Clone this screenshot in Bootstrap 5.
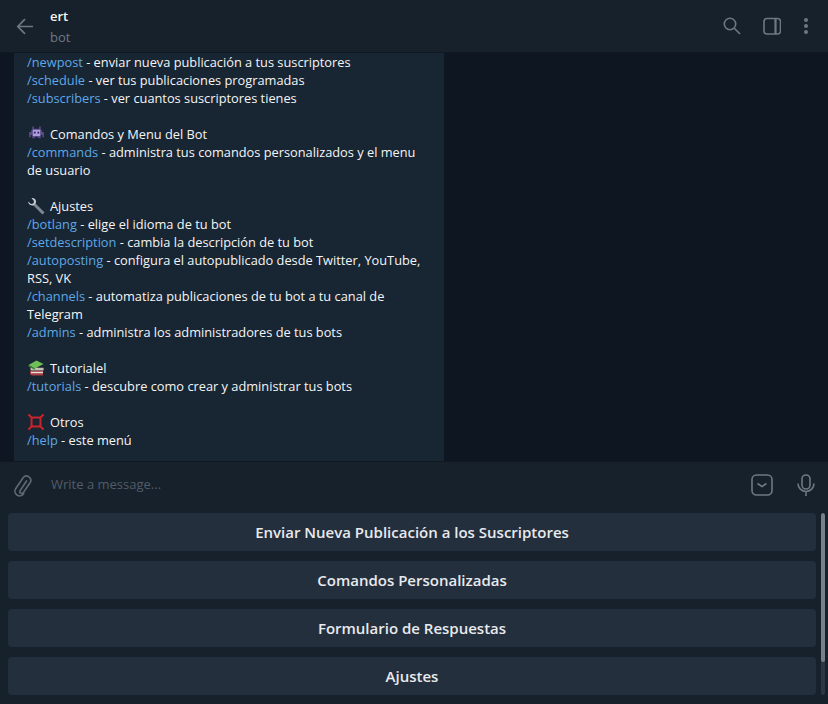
<!DOCTYPE html>
<html lang="es">
<head>
<meta charset="utf-8">
<title>ert</title>
<link href="https://cdn.jsdelivr.net/npm/bootstrap@5.3.0/dist/css/bootstrap.min.css" rel="stylesheet">
<style>
html,body{height:100%;margin:0}
body{background:#17212b;font-family:"Open Sans","Noto Sans",sans-serif;font-size:12.8px;color:#f5f5f5;overflow:hidden}
.tg-app{width:828px;height:704px}
.tg-head{height:53px;background:#17212b;border-bottom:1px solid #101921;padding:0 19px 0 15px}
.tg-title{font-size:13px;font-weight:600;color:#f5f5f5;line-height:18px}
.tg-sub{font-size:13px;color:#6d7883;line-height:18px;margin-top:3px}
.tg-who{margin-left:15px;padding-top:7px}
.tg-acts{gap:22px}
.tg-msgs{height:408px;background:#0e1621;overflow:hidden;padding-left:14px}
.tg-bubble{width:430px;height:408px;background:#182533;padding:0 13px 12px;line-height:18px}
.tg-cmd{color:#5fa8e6}
.tg-emo{display:inline-block;width:18px;height:18px;vertical-align:top;margin-right:5px}
.tg-input{height:47px;background:#17212b;border-top:1px solid #101921;padding:0 13px 0 13px}
.tg-ph{color:#505c68;font-size:13px;margin-left:18px}
.tg-kb{height:196px;background:#17212b;padding:5px 0 0 8px;gap:5px}
.tg-keys{width:808px;gap:10px}
.tg-key{height:38px;background:#242f3d;color:#e8eaed;font-size:15px;font-weight:600;border-radius:4px;border:0;width:100%;padding:0;line-height:38px;text-align:center}
.tg-track{width:4px;height:182px;background:#2b3743;border-radius:2px;overflow:hidden}
.tg-thumb{height:149px;background:#76808a;border-radius:2px}
</style>
</head>
<body>
<div class="tg-app d-flex flex-column">
  <header class="tg-head d-flex align-items-center">
    <svg width="20" height="20" viewBox="0 0 20 20" fill="none" stroke="#6d7883" stroke-width="1.7"><path d="M18 10.500H3M10 3.200 2.800 10.500 10 17.800"/></svg>
    <div class="tg-who flex-grow-1 align-self-start">
      <div class="tg-title">ert</div>
      <div class="tg-sub">bot</div>
    </div>
    <div class="tg-acts d-flex align-items-center">
      <svg width="18" height="18" viewBox="0 0 18 18" fill="none" stroke="#6d7883" stroke-width="1.600"><circle cx="7" cy="7" r="5.700"/><path d="m11 11 6 6"/></svg>
      <svg width="18" height="18" viewBox="0 0 18 18" fill="none" stroke="#6d7883" stroke-width="1.600"><rect x="1" y="1.500" width="16.500" height="15.500" rx="3"/><path d="M12.500 1.500V17" stroke-width="2.200"/></svg>
      <svg width="6" height="18" viewBox="0 0 6 18" fill="#6d7883"><circle cx="3" cy="3" r="2"/><circle cx="3" cy="9" r="2"/><circle cx="3" cy="15" r="2"/></svg>
    </div>
  </header>
  <main class="tg-msgs">
    <div class="tg-bubble">
      <div><span class="tg-cmd">/newpost</span> - enviar nueva publicación a tus suscriptores</div>
      <div><span class="tg-cmd">/schedule</span> - ver tus publicaciones programadas</div>
      <div><span class="tg-cmd">/subscribers</span> - ver cuantos suscriptores tienes</div>
      <div>&nbsp;</div>
      <div><svg class="tg-emo" viewBox="0 1.500 17 17"><path fill="#5a4b86" d="M5 3h1.500v2h5V3H13v3h1v2h2v5h-1.500v-2H13v3h-2.500v-1.500h-3V14H5v-3H3.500v2H2V8h2V6h1z"/><path fill="#a99bdc" d="M5.500 6h7v6h-7z"/><path fill="#2c2450" d="M6.500 7.800h1.600v1.700H6.500zM9.900 7.800h1.600v1.700H9.900z"/></svg>Comandos y Menu del Bot</div>
      <div><span class="tg-cmd">/commands</span> - administra tus comandos personalizados y el menu de usuario</div>
      <div>&nbsp;</div>
      <div><svg class="tg-emo" viewBox="0 0 18 18" fill="none"><path d="M6.500 6.500 16.500 16.500" stroke="#7e8892" stroke-width="3"/><path d="M1.200 4.500 4 7l2.500-.5L7 4 4.500 1.200C6.500.6 8.600 1.700 9 4c.2 1.300-.2 2.400-1 3.200C7 8.200 5.500 8.700 4 8.300 2.300 7.800 1 6.200 1.200 4.500z" fill="#c2c9d0"/></svg>Ajustes</div>
      <div><span class="tg-cmd">/botlang</span> - elige el idioma de tu bot</div>
      <div><span class="tg-cmd">/setdescription</span> - cambia la descripción de tu bot</div>
      <div><span class="tg-cmd">/autoposting</span> - configura el autopublicado desde Twitter, YouTube, RSS, VK</div>
      <div><span class="tg-cmd">/channels</span> - automatiza publicaciones de tu bot a tu canal de Telegram</div>
      <div><span class="tg-cmd">/admins</span> - administra los administradores de tus bots</div>
      <div>&nbsp;</div>
      <div><svg class="tg-emo" viewBox="0 0 18 18"><path d="M3 12h13v4.500H5.500C4 16.500 3 15.500 3 14.500z" fill="#a63e46"/><path d="M4 12.800h12v1.400H4z" fill="#e6e2d6"/><path d="M3 8.500h13.500V12H5C3.800 12 3 11 3 10.200z" fill="#7b6a66"/><path d="M4 9.300h12.500v1.400H4z" fill="#e6e2d6"/><path d="M1.500 6 9.500 1.500 16.500 5 8 9.500z" fill="#6fbf58"/><path d="M1.500 6 8 9.500v1.500L1.500 7.500z" fill="#3d7f3a"/></svg>Tutorialel</div>
      <div><span class="tg-cmd">/tutorials</span> - descubre como crear y administrar tus bots</div>
      <div>&nbsp;</div>
      <div><svg class="tg-emo" viewBox="0 0 18 18" fill="none" stroke="#c9242b" stroke-width="2" stroke-linecap="round"><path d="M6 4.500h6c1.500 1.500 1.500 0 1.500 1.500v6c0 1.500 0 0-1.500 1.500H6C4.500 12 4.500 13.500 4.500 12V6c0-1.500 0 0 1.500-1.500z"/><path d="M2 2l3 3M16 2l-3 3M2 16l3-3M16 16l-3-3"/></svg>Otros</div>
      <div><span class="tg-cmd">/help</span> - este menú</div>
    </div>
  </main>
  <div class="tg-input d-flex align-items-center">
    <svg width="20" height="23" viewBox="0 0 20 23" fill="none" stroke="#5d6873" stroke-width="1.700" stroke-linecap="round"><path d="M13.500 7 7 16.800a1.900 1.900 0 0 0 3.100 2.100L17.200 8.500a4.300 4.300 0 0 0-7.100-4.800L2.800 14.500a4.700 4.700 0 0 0 7.800 5.300"/></svg>
    <span class="tg-ph flex-grow-1">Write a message...</span>
    <svg class="tg-box" width="22" height="22" viewBox="0 0 22 22" fill="none" stroke="#6d7883" stroke-width="1.600"><rect x="1" y="1" width="20" height="20" rx="4.500"/><path d="m6.500 9.500 4.500 3 4.500-3"/></svg>
    <svg class="ms-4" width="18" height="22" viewBox="0 0 18 22" fill="none" stroke="#6d7883" stroke-width="1.600"><rect x="5" y="1" width="8" height="14" rx="4"/><path d="M1 9.500a8 8 0 0 0 16 0M9 17.500V22"/></svg>
  </div>
  <div class="tg-kb d-flex">
    <div class="tg-keys d-flex flex-column">
      <button class="tg-key" type="button">Enviar Nueva Publicación a los Suscriptores</button>
      <button class="tg-key" type="button">Comandos Personalizadas</button>
      <button class="tg-key" type="button">Formulario de Respuestas</button>
      <button class="tg-key" type="button">Ajustes</button>
    </div>
    <div class="tg-track"><div class="tg-thumb"></div></div>
  </div>
</div>
<script src="https://cdn.jsdelivr.net/npm/bootstrap@5.3.0/dist/js/bootstrap.bundle.min.js"></script>
</body>
</html>
